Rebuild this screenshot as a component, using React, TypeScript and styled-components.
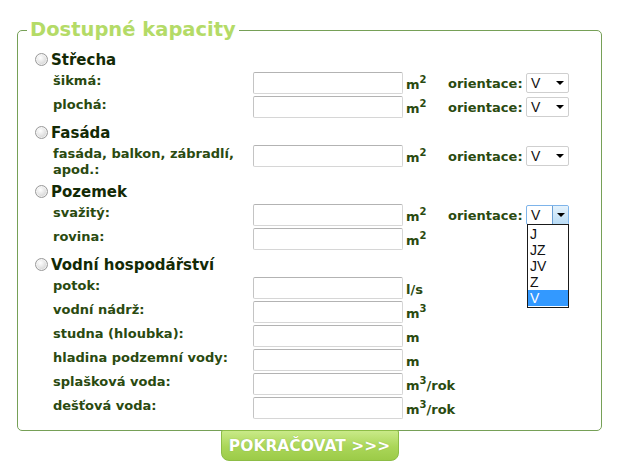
import React from "react";
import styled, { createGlobalStyle, css } from "styled-components";

const Global = createGlobalStyle`
  html, body { margin: 0; padding: 0; background: #ffffff; }
  body { font-family: Verdana, "DejaVu Sans", sans-serif; }
`;

const Page = styled.div`
  width: 617px;
  height: 469px;
  box-sizing: border-box;
  padding: 19px 0 0 17px;
`;

const Form = styled.form`
  width: 585px;
  display: flex;
  flex-direction: column;
  align-items: center;
`;

const Fieldset = styled.fieldset`
  box-sizing: border-box;
  width: 585px;
  margin: 0;
  padding: 7px 0 11px 17px;
  border: 1px solid #76a057;
  border-radius: 5px;
  display: flex;
  flex-direction: column;
  gap: 2px;
`;

const Legend = styled.legend`
  margin-left: -8px;
  padding: 0 3px;
  font-family: Verdana, "DejaVu Sans", sans-serif;
  font-weight: bold;
  font-size: 19.5px;
  line-height: 22px;
  color: #b4db67;
`;

const Section = styled.div<{ $first?: boolean }>`
  display: flex;
  flex-direction: column;
  gap: 2px;
  margin-top: ${(p) => (p.$first ? "0" : "1px")};
`;

const Header = styled.label`
  display: flex;
  align-items: center;
  gap: 3px;
  height: 22px;
  padding-top: 1px;
  box-sizing: border-box;
  font-weight: bold;
  font-size: 15px;
  color: #132a05;
`;

const Radio = styled.span`
  box-sizing: border-box;
  width: 13px;
  height: 13px;
  border-radius: 50%;
  border: 1px solid #9a9a9a;
  background: radial-gradient(circle at 40% 35%, #ffffff 0%, #e6e6e6 45%, #c4c4c4 100%);
  box-shadow: inset 0 0 0 1px rgba(255, 255, 255, 0.6);
`;

const Row = styled.div<{ $tall?: boolean }>`
  display: grid;
  grid-template-columns: 200px 150px 45px 78px 43px;
  height: ${(p) => (p.$tall ? "32px" : "22px")};
  padding-left: 18px;
  align-items: start;
`;

const Label = styled.span`
  font-weight: bold;
  font-size: 13px;
  line-height: 16px;
  padding-top: 1px;
  color: #2a4a10;
  width: 190px;
`;

const Input = styled.span`
  box-sizing: border-box;
  display: block;
  width: 150px;
  height: 22px;
  border: 1px solid #d6d6d6;
  border-top-color: #b3b3b3;
  border-left-color: #c4c4c4;
  border-radius: 2px;
  background: #fff;
`;

const Unit = styled.span`
  font-weight: bold;
  font-size: 13px;
  line-height: 16px;
  padding: 5px 0 0 3px;
  color: #2a4a10;
  white-space: nowrap;
  sup {
    font-size: 10px;
    line-height: 0;
    vertical-align: 6px;
  }
`;

const Orient = styled.span`
  font-weight: bold;
  font-size: 13px;
  line-height: 16px;
  padding-top: 4px;
  color: #2a4a10;
`;

const SelectBox = styled.span<{ $open?: boolean }>`
  position: relative;
  box-sizing: border-box;
  display: flex;
  align-items: center;
  justify-content: space-between;
  margin-top: 1px;
  width: 43px;
  height: 20px;
  border: 1px solid #cfcfcf;
  border-radius: 2px;
  background: #fff;
  padding-left: 4px;
  font-family: "Liberation Sans", Arial, sans-serif;
  font-size: 14px;
  color: #111;
  ${(p) =>
    p.$open &&
    css`
      border-color: #7eb4ea;
    `}
`;

const Arrow = styled.span<{ $open?: boolean }>`
  box-sizing: border-box;
  display: flex;
  align-items: center;
  justify-content: center;
  width: 16px;
  height: 18px;
  ${(p) =>
    p.$open &&
    css`
      border-left: 1px solid #6a9fd4;
      background: linear-gradient(#e4f2fc, #b9dcf6);
      border-radius: 0 2px 2px 0;
    `}
  &::after {
    content: "";
    border-left: 4px solid transparent;
    border-right: 4px solid transparent;
    border-top: 4px solid #000;
  }
`;

const List = styled.ul`
  position: absolute;
  top: 18px;
  left: 0px;
  box-sizing: border-box;
  width: 42px;
  margin: 0;
  padding: 1px 0;
  list-style: none;
  background: #fff;
  border: 1px solid #1a1a1a;
  z-index: 5;
`;

const Item = styled.li<{ $sel?: boolean }>`
  height: 16px;
  line-height: 16px;
  padding-left: 2px;
  font-family: "Liberation Sans", Arial, sans-serif;
  font-size: 14px;
  color: ${(p) => (p.$sel ? "#fff" : "#111")};
  background: ${(p) => (p.$sel ? "#3399ff" : "transparent")};
`;

const Submit = styled.button`
  box-sizing: border-box;
  width: 178px;
  height: 31px;
  margin: -1px 0 0 0;
  border: 1px solid #8dbd46;
  border-radius: 2px 2px 8px 8px;
  background: linear-gradient(#c9ea88, #aad658 55%, #9ccb48);
  color: #fff;
  font-family: Verdana, "DejaVu Sans", sans-serif;
  font-weight: bold;
  font-size: 15.5px;
  text-shadow: 0 0 1px #7fa83c;
  padding: 0;
  cursor: pointer;
`;

type Sel = { open?: boolean };

const Select = ({ open }: Sel) => (
  <SelectBox $open={open}>
    V
    <Arrow $open={open} />
    {open && (
      <List>
        {["J", "JZ", "JV", "Z", "V"].map((o) => (
          <Item key={o} $sel={o === "V"}>
            {o}
          </Item>
        ))}
      </List>
    )}
  </SelectBox>
);

type Field = {
  label: string;
  unit: React.ReactNode;
  orient?: boolean;
  open?: boolean;
  tall?: boolean;
};

const m2 = (
  <>
    m<sup>2</sup>
  </>
);
const m3 = (
  <>
    m<sup>3</sup>
  </>
);
const m3rok = (
  <>
    m<sup>3</sup>/rok
  </>
);

const sections: { title: string; fields: Field[] }[] = [
  {
    title: "Střecha",
    fields: [
      { label: "šikmá:", unit: m2, orient: true },
      { label: "plochá:", unit: m2, orient: true },
    ],
  },
  {
    title: "Fasáda",
    fields: [{ label: "fasáda, balkon, zábradlí, apod.:", unit: m2, orient: true, tall: true }],
  },
  {
    title: "Pozemek",
    fields: [
      { label: "svažitý:", unit: m2, orient: true, open: true },
      { label: "rovina:", unit: m2 },
    ],
  },
  {
    title: "Vodní hospodářství",
    fields: [
      { label: "potok:", unit: "l/s" },
      { label: "vodní nádrž:", unit: m3 },
      { label: "studna (hloubka):", unit: "m" },
      { label: "hladina podzemní vody:", unit: "m" },
      { label: "splašková voda:", unit: m3rok },
      { label: "dešťová voda:", unit: m3rok },
    ],
  },
];

export default function App() {
  return (
    <Page>
      <Global />
      <Form onSubmit={(e) => e.preventDefault()}>
        <Fieldset>
          <Legend>Dostupné kapacity</Legend>
          {sections.map((s, i) => (
            <Section key={s.title} $first={i === 0}>
              <Header>
                <Radio />
                {s.title}
              </Header>
              {s.fields.map((f) => (
                <Row key={f.label} $tall={f.tall}>
                  <Label>{f.label}</Label>
                  <Input />
                  <Unit>{f.unit}</Unit>
                  {f.orient && (
                    <>
                      <Orient>orientace:</Orient>
                      <Select open={f.open} />
                    </>
                  )}
                </Row>
              ))}
            </Section>
          ))}
        </Fieldset>
        <Submit type="submit">POKRAČOVAT &gt;&gt;&gt;</Submit>
      </Form>
    </Page>
  );
}
